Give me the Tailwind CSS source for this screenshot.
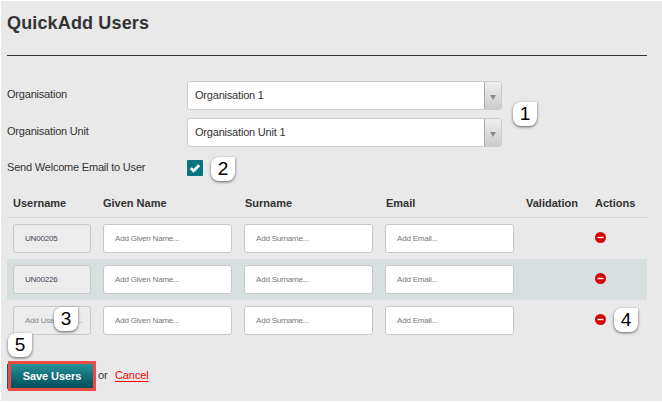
<!DOCTYPE html>
<html lang="en">
<head>
<meta charset="utf-8">
<title>QuickAdd Users</title>
<script src="https://cdn.jsdelivr.net/npm/@tailwindcss/browser@4"></script>
</head>
<body class="relative w-[662px] h-[402px] overflow-hidden bg-[#e9e9e9] border-t border-l border-b border-white pl-1.5 pr-[15px] font-['Liberation_Sans',Arial,sans-serif] text-[11px] tracking-[-0.2px] text-[#333]">
<svg class="hidden">
  <symbol id="remove" viewBox="0 0 11 11"><circle cx="5.5" cy="5.5" r="5.5" fill="#d90000"/><rect x="2.5" y="4.8" width="6" height="1.4" fill="#fff"/></symbol>
</svg>
<h1 class="h-[55px] pt-2.5 border-b border-[#333] text-[18px] leading-[25px] font-bold tracking-[0.15px] whitespace-nowrap">QuickAdd Users</h1>

<form>
  <div class="mt-[25px] flex h-[29px]">
    <label class="w-[180px] leading-[27px]">Organisation</label>
    <div class="flex w-[315px] rounded-[3px] border border-[#ccc] bg-white overflow-hidden">
      <span class="flex-1 pl-[7px] leading-[27px]">Organisation 1</span>
      <span class="w-[17px] border-l border-[#aaa] bg-linear-to-b from-[#eee] to-[#ccc] flex items-center justify-center"><svg class="w-[6px] h-[5px] mt-[3px]" viewBox="0 0 6 5"><path d="M0 0h6L3 5z" fill="#888"/></svg></span>
    </div>
  </div>
  <div class="mt-2 flex h-[29px]">
    <label class="w-[180px] leading-[27px]">Organisation Unit</label>
    <div class="flex w-[315px] rounded-[3px] border border-[#ccc] bg-white overflow-hidden">
      <span class="flex-1 pl-[7px] leading-[27px]">Organisation Unit 1</span>
      <span class="w-[17px] border-l border-[#aaa] bg-linear-to-b from-[#eee] to-[#ccc] flex items-center justify-center"><svg class="w-[6px] h-[5px] mt-[3px]" viewBox="0 0 6 5"><path d="M0 0h6L3 5z" fill="#888"/></svg></span>
    </div>
  </div>
  <div class="mt-[13px] flex h-4">
    <label class="w-[180px] leading-[15px]">Send Welcome Email to User</label>
    <span class="w-4 h-4 rounded-[1px] bg-[#07757f]"><svg class="w-4 h-4" viewBox="0 0 16 16"><path d="M3.8 8.1l2.8 2.8 5.6-5.6" fill="none" stroke="#fff" stroke-width="2.7"/></svg></span>
  </div>

  <div class="mt-[13px] h-[29px] grid grid-cols-[90px_141px_141px_141px_69px_45px] pl-1.5 border-b border-[#d5d5d5] font-bold leading-[28px] tracking-[0px]">
    <span>Username</span><span>Given Name</span><span class="pl-px">Surname</span><span class="pl-px">Email</span><span>Validation</span><span>Actions</span>
  </div>
  <div class="h-[41px] grid grid-cols-[90px_141px_141px_141px_69px_45px] items-center pl-1.5 text-[8px] text-[#777]">
    <div class="w-[78px] h-[29px] rounded-[3px] border border-[#c8c8c8] bg-[#ececec] pl-[11px] leading-[27px] text-[#445]">UN00205</div>
    <div class="w-[129px] h-[29px] rounded-[3px] border border-[#c8c8c8] bg-white pl-[11px] leading-[27px]">Add Given Name...</div>
    <div class="w-[129px] h-[29px] rounded-[3px] border border-[#c8c8c8] bg-white pl-[11px] leading-[27px]">Add Surname...</div>
    <div class="w-[129px] h-[29px] rounded-[3px] border border-[#c8c8c8] bg-white pl-[11px] leading-[27px]">Add Email...</div>
    <span></span>
    <svg class="w-[11px] h-[11px] -mt-[2px]"><use href="#remove"/></svg>
  </div>
  <div class="h-[41px] grid grid-cols-[90px_141px_141px_141px_69px_45px] items-center pl-1.5 bg-[#d7dfe0] text-[8px] text-[#777]">
    <div class="w-[78px] h-[29px] rounded-[3px] border border-[#c8c8c8] bg-[#ececec] pl-[11px] leading-[27px] text-[#445]">UN00226</div>
    <div class="w-[129px] h-[29px] rounded-[3px] border border-[#c8c8c8] bg-white pl-[11px] leading-[27px]">Add Given Name...</div>
    <div class="w-[129px] h-[29px] rounded-[3px] border border-[#c8c8c8] bg-white pl-[11px] leading-[27px]">Add Surname...</div>
    <div class="w-[129px] h-[29px] rounded-[3px] border border-[#c8c8c8] bg-white pl-[11px] leading-[27px]">Add Email...</div>
    <span></span>
    <svg class="w-[11px] h-[11px] -mt-[2px]"><use href="#remove"/></svg>
  </div>
  <div class="h-[41px] grid grid-cols-[90px_141px_141px_141px_69px_45px] items-center pl-1.5 text-[8px] text-[#777]">
    <div class="w-[78px] h-[29px] rounded-[3px] border border-[#c8c8c8] bg-[#ececec] pl-[11px] leading-[27px] text-[#888]">Add Username...</div>
    <div class="w-[129px] h-[29px] rounded-[3px] border border-[#c8c8c8] bg-white pl-[11px] leading-[27px]">Add Given Name...</div>
    <div class="w-[129px] h-[29px] rounded-[3px] border border-[#c8c8c8] bg-white pl-[11px] leading-[27px]">Add Surname...</div>
    <div class="w-[129px] h-[29px] rounded-[3px] border border-[#c8c8c8] bg-white pl-[11px] leading-[27px]">Add Email...</div>
    <span></span>
    <svg class="w-[11px] h-[11px] -mt-[2px]"><use href="#remove"/></svg>
  </div>

  <div class="mt-5 flex h-[30px] items-center">
    <span class="w-px h-[25px] bg-[#07606a]"></span>
    <button type="button" class="w-[88px] h-[30px] border-[3px] border-[#ee4b42] bg-linear-to-b from-[#26929a] to-[#004f59] text-white font-bold leading-[24px] tracking-[-0.1px] whitespace-nowrap">Save Users</button>
    <span class="ml-[2px] w-[17px] -mt-0.5">or</span>
    <a class="text-[#f00] -mt-0.5 tracking-[-0.1px] underline underline-offset-2">Cancel</a>
  </div>
</form>

<div class="absolute left-[512px] top-[101px] w-6 h-6 rounded-[8px] rounded-tr-[1px] bg-white shadow-[0_1px_3px_rgba(0,0,0,0.6)] text-center text-[19px] leading-6 text-black">1</div>
<div class="absolute left-[210px] top-[156px] w-6 h-6 rounded-[8px] rounded-tr-[1px] bg-white shadow-[0_1px_3px_rgba(0,0,0,0.6)] text-center text-[19px] leading-6 text-black">2</div>
<div class="absolute left-[53px] top-[306px] w-6 h-6 rounded-[8px] rounded-tr-[1px] bg-white shadow-[0_1px_3px_rgba(0,0,0,0.6)] text-center text-[19px] leading-6 text-black">3</div>
<div class="absolute left-[613px] top-[307px] w-6 h-6 rounded-[8px] rounded-tr-[1px] bg-white shadow-[0_1px_3px_rgba(0,0,0,0.6)] text-center text-[19px] leading-6 text-black">4</div>
<div class="absolute left-[7px] top-[332px] w-6 h-6 rounded-[8px] rounded-tr-[1px] bg-white shadow-[0_1px_3px_rgba(0,0,0,0.6)] text-center text-[19px] leading-6 text-black">5</div>
</body>
</html>
